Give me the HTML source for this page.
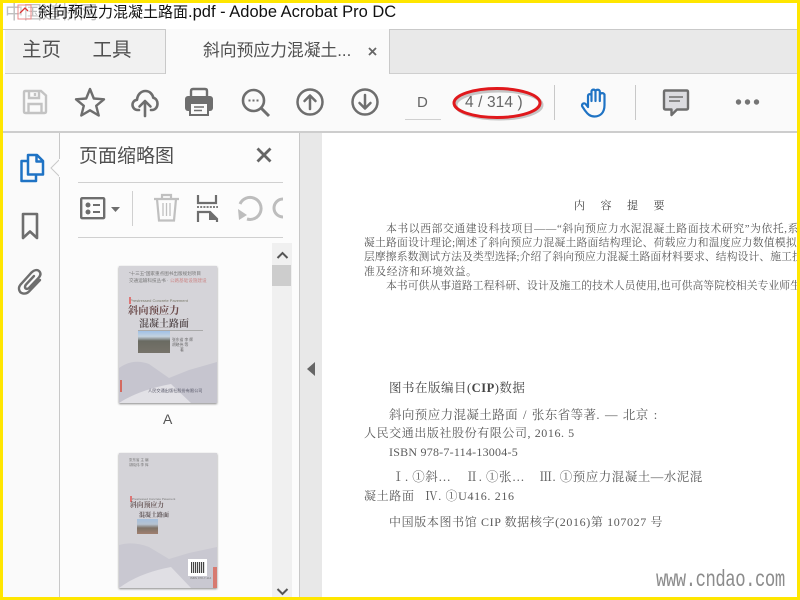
<!DOCTYPE html>
<html><head><meta charset="utf-8">
<style>
html,body{margin:0;padding:0;width:800px;height:600px;overflow:hidden;background:#fff}
body{position:relative;font-family:"Liberation Sans","Noto Sans CJK SC",sans-serif}
.a{position:absolute}
.t{position:absolute;white-space:nowrap;line-height:1}
.s{font-family:"Liberation Serif","Noto Serif CJK SC",serif;color:#5a5a5a;filter:blur(.35px)}
svg{position:absolute;overflow:visible}
.thumb{filter:blur(.35px)}
</style></head><body>
<!-- tab bar -->
<div class="a" style="left:3px;top:29px;width:794px;height:45px;background:#e9e9e9"></div>
<div class="a" style="left:3px;top:29px;width:794px;height:1px;background:#c9c9c9"></div>
<div class="a" style="left:3px;top:73px;width:794px;height:1px;background:#cfcfcf"></div>
<div class="a" style="left:5px;top:30px;width:160px;height:43px;background:#f1f1f1"></div>
<div class="a" style="left:165px;top:29px;width:225px;height:45px;background:#fafafa;border-left:1px solid #c9c9c9;border-right:1px solid #c9c9c9;box-sizing:border-box"></div>
<div class="a" style="left:3px;top:30px;width:2px;height:44px;background:#fff"></div>
<div class="t" style="left:22px;top:41px;font-size:19.5px;color:#505050">主页</div>
<div class="t" style="left:92.500px;top:41px;font-size:19.5px;color:#505050">工具</div>
<div class="t" style="left:203px;top:43px;font-size:16.8px;color:#505050">斜向预应力混凝土...</div>
<svg style="left:368px;top:47px" width="9" height="9"><path d="M1 1L8 8M8 1L1 8" stroke="#666" stroke-width="1.800"/></svg>
<!-- toolbar -->
<div class="a" style="left:3px;top:74px;width:794px;height:57px;background:#fafafa"></div>
<div class="a" style="left:3px;top:131px;width:794px;height:2px;background:#cdcdcd"></div>
<!-- save -->
<svg style="left:22px;top:89px" width="26" height="26" fill="none" stroke="#c3c3c3" stroke-width="2.400"><path d="M2 3.500Q2 2 3.500 2H19L24 6.500V22.500Q24 24 22.500 24H3.500Q2 24 2 22.500Z"/><path d="M7 2V9H17V2M13 4V7M6.500 24V15H19.500V24"/></svg>
<!-- star -->
<svg style="left:75px;top:87px" width="30" height="30" fill="none" stroke="#6e6e6e" stroke-width="2.400" stroke-linejoin="round"><path d="M15 2L18.800 11.500L29 12.300L21.200 18.800L23.700 28.500L15 23.300L6.300 28.500L8.800 18.800L1 12.300L11.200 11.500Z"/></svg>
<!-- cloud upload -->
<svg style="left:131px;top:88px" width="28" height="28" fill="none" stroke="#6e6e6e" stroke-width="2.600" stroke-linecap="round" stroke-linejoin="round"><path d="M8 22H6.500C3.500 22 1.500 19.500 1.500 16.800C1.500 14 3.500 12 6 11.800C6.500 6.500 10 3 14.500 3C18.500 3 21.500 6 22.300 9.800C25 10.500 26.500 13 26.500 15.800C26.500 19 24.500 22 21 22H20"/><path d="M14 28V13M8.500 18.500L14 13L19.500 18.500"/></svg>
<!-- print -->
<svg style="left:185px;top:88px" width="28" height="28"><path d="M6 9V3Q6 1 8 1H20Q22 1 22 3V9" fill="none" stroke="#6e6e6e" stroke-width="2.400"/><rect x="0" y="8" width="28" height="15" rx="3" fill="#6e6e6e"/><rect x="5" y="15" width="18" height="12" fill="#fafafa" stroke="#6e6e6e" stroke-width="2"/><path d="M9 19H19M9 22.500H17" stroke="#6e6e6e" stroke-width="1.500"/></svg>
<!-- search -->
<svg style="left:241px;top:88px" width="30" height="30" fill="none" stroke="#6e6e6e" stroke-width="2.600"><circle cx="12.500" cy="12.500" r="10.500"/><path d="M20 20L28 28" stroke-width="3"/><path d="M7.500 12.500H18" stroke-dasharray="2 2" stroke-width="2"/></svg>
<!-- up -->
<svg style="left:296px;top:88px" width="28" height="28" fill="none" stroke="#6e6e6e" stroke-width="2.500" stroke-linecap="round" stroke-linejoin="round"><circle cx="14" cy="14" r="12.500"/><path d="M14 21V8M8.500 13L14 7.500L19.500 13"/></svg>
<!-- down -->
<svg style="left:351px;top:88px" width="28" height="28" fill="none" stroke="#6e6e6e" stroke-width="2.500" stroke-linecap="round" stroke-linejoin="round"><circle cx="14" cy="14" r="12.500"/><path d="M14 7V20M8.500 15L14 20.500L19.500 15"/></svg>
<div class="t" style="left:417px;top:95px;font-size:15px;color:#666">D</div>
<div class="a" style="left:405px;top:119px;width:36px;height:1px;background:#d0d0d0"></div>
<div class="t" style="left:465px;top:95px;font-size:15.500px;color:#666;letter-spacing:.1px">4 / 314 )</div>
<svg style="left:450px;top:85px" width="96" height="38" fill="none"><ellipse cx="49" cy="20" rx="43" ry="14" stroke="#999" stroke-width="3" opacity=".55"/><ellipse cx="47" cy="18" rx="43" ry="14.500" stroke="#e0181c" stroke-width="3"/></svg>
<div class="a" style="left:554px;top:85px;width:1px;height:35px;background:#c8c8c8"></div>
<div class="a" style="left:635px;top:85px;width:1px;height:35px;background:#c8c8c8"></div>
<!-- hand -->
<svg style="left:581px;top:88px" width="29" height="30" fill="none" stroke="#1f73c4" stroke-width="2.200" stroke-linecap="round" stroke-linejoin="round"><path d="M7 19V8C7 5.500 10.500 5.500 10.500 8V13M10.500 13V3.500C10.500 1 14.500 1 14.500 3.500V13M14.500 13V3.500C14.500 1.200 18.800 1.200 18.800 3.500V13M18.800 13V7C18.800 4.500 23.500 4.500 23.500 7V17C23.500 24.500 19.500 28.500 13.500 28.500C9 28.500 6.500 26 4 22.500L1.300 18.500C0 16 3.300 14 5 16.500L7 19"/></svg>
<!-- comment -->
<svg style="left:663px;top:89px" width="26" height="27" fill="none"><path d="M2.500 1.500H23.500Q25 1.500 25 3V19Q25 20.500 23.500 20.500H14L8.500 26V20.500H2.500Q1 20.500 1 19V3Q1 1.500 2.500 1.500Z" fill="#dcdce0" stroke="#6e6e6e" stroke-width="2.400" stroke-linejoin="round"/><path d="M6 8H20M6 12H17" stroke="#6e6e6e" stroke-width="1.500"/></svg>
<!-- more -->
<svg style="left:735px;top:98px" width="25" height="8" fill="#757575"><circle cx="3.500" cy="4" r="2.700"/><circle cx="12.500" cy="4" r="2.700"/><circle cx="21.500" cy="4" r="2.700"/></svg>
<!-- side rail -->
<div class="a" style="left:3px;top:133px;width:56px;height:464px;background:#fafafa"></div>
<div class="a" style="left:59px;top:133px;width:1px;height:464px;background:#c8c8c8"></div>
<div class="a" style="left:60px;top:133px;width:239px;height:464px;background:#fcfcfc"></div>
<svg style="left:50px;top:157px" width="11" height="22"><path d="M10 2L1 11L10 20" fill="#fcfcfc" stroke="#c8c8c8"/><path d="M10 2V20" stroke="#fcfcfc" stroke-width="2"/></svg>
<!-- pages icon -->
<svg style="left:19px;top:153px" width="26" height="30" fill="none" stroke="#1f73c4" stroke-width="2.500" stroke-linejoin="round"><path d="M9 2H18L24 8V21.500H9Z"/><path d="M17.500 2V8.500H24"/><path d="M9 8H2.500V28H17V21.500"/></svg>
<!-- bookmark -->
<svg style="left:21px;top:212px" width="18" height="28" fill="none" stroke="#6e6e6e" stroke-width="2.600" stroke-linejoin="round"><path d="M2 2H16V26L9 19.500L2 26Z"/></svg>
<!-- paperclip -->
<svg style="left:17px;top:268px" width="26" height="28" fill="none" stroke="#6e6e6e" stroke-width="2.400" stroke-linecap="round"><path d="M23 12L12 23.500C8.500 27 2.500 26 2 21C1.700 18.500 3 17 4.500 15.500L14.500 4.500C17 2 20.500 1 22.500 3.500C24.500 6 23 8.500 21 10.500L12 20C10.500 21.500 8 21 8 19C8 18 8.500 17 9.500 16L17 8"/></svg>
<!-- panel header -->
<div class="t" style="left:79px;top:147px;font-size:19px;color:#505050">页面缩略图</div>
<svg style="left:256px;top:147px" width="16" height="16"><path d="M1.500 1.500L14.500 14.500M14.500 1.500L1.500 14.500" stroke="#666" stroke-width="2.800"/></svg>
<div class="a" style="left:78px;top:182px;width:205px;height:1px;background:#d0d0d0"></div>
<div class="a" style="left:78px;top:237px;width:205px;height:1px;background:#d0d0d0"></div>
<!-- panel toolbar -->
<svg style="left:80px;top:197px" width="26" height="23" fill="none" stroke="#6e6e6e"><rect x="1.200" y="1.200" width="23" height="20" rx="1" stroke-width="2.400"/><circle cx="8" cy="8" r="2.500" fill="#6e6e6e" stroke="none"/><circle cx="8" cy="15" r="2.500" fill="#6e6e6e" stroke="none"/><path d="M13 8H20M13 15H20" stroke-width="2"/></svg>
<svg style="left:111px;top:207px" width="9" height="5"><path d="M0 0H9L4.500 5Z" fill="#6e6e6e"/></svg>
<div class="a" style="left:132px;top:191px;width:1px;height:35px;background:#d0d0d0"></div>
<svg style="left:153px;top:193px" width="27" height="29" fill="none" stroke="#c0c0c0" stroke-width="2.200"><path d="M1 6H26M9 6V2H18V6"/><path d="M4 6L6 27.500H21L23 6"/><path d="M10 10V23M13.500 10V23M17 10V23" stroke-width="1.300"/></svg>
<svg style="left:196px;top:195px" width="23" height="27" fill="none" stroke="#6e6e6e" stroke-width="2.200"><path d="M2 0V8H20V0"/><path d="M1 12H22" stroke-dasharray="2 1.200" stroke-width="1.800"/><path d="M2 27V17H14L21 24V27"/><path d="M13 17L21 25H13Z" fill="#6e6e6e" stroke="none"/></svg>
<svg style="left:236px;top:195px" width="28" height="28" fill="none" stroke="#bdbdbd" stroke-width="3"><path d="M4 9A11 11 0 1 1 11 24"/><path d="M2 14L11 20L3 25Z" fill="#bdbdbd" stroke="none"/></svg>
<svg style="left:278px;top:197px" width="5" height="22" fill="none"><path d="M5 2A9 9 0 0 0 5 20" stroke="#bdbdbd" stroke-width="3"/></svg>
<!-- scrollbar -->
<div class="a" style="left:272px;top:243px;width:20px;height:354px;background:#f0f0f0"></div>
<div class="a" style="left:272px;top:265px;width:19px;height:21px;background:#cdcdcd"></div>
<svg style="left:276px;top:251px" width="13" height="8"><path d="M1.500 7L6.500 2L11.500 7" fill="none" stroke="#555" stroke-width="2"/></svg>
<svg style="left:276px;top:588px" width="13" height="8"><path d="M1.500 1L6.500 6L11.500 1" fill="none" stroke="#555" stroke-width="2"/></svg>
<!-- thumb 1 -->
<div class="a thumb" style="left:119px;top:266px;width:98px;height:137px;background:#d5d4d9;box-shadow:0 1px 2px #888;overflow:hidden">
 <svg style="left:0;top:90px" width="98" height="47"><path d="M0 12Q14 2 30 8L50 22L70 14L98 6V47H0Z" fill="#c6c5cf"/><path d="M0 47Q20 34 52 28L72 47Z" fill="#e2e1e6"/></svg>
 <div class="t" style="left:10px;top:6px;font-size:4.600px;color:#777">“十三五”国家重点图书出版规划项目</div>
 <div class="t" style="left:10px;top:13px;font-size:4.600px;color:#777">交通运输科技丛书 · <span style="color:#c88">公路基础设施建设</span></div>
 <div class="t" style="left:11px;top:33px;font-size:4px;color:#776;">Prestressed Concrete Pavement</div>
 <div class="a" style="left:10px;top:31px;width:2px;height:7px;background:#d77"></div>
 <div class="t" style="left:9px;top:41px;font-size:10.300px;font-weight:bold;color:#6b4a4a;font-family:'Liberation Serif','Noto Serif CJK SC',serif">斜向预应力</div>
 <div class="t" style="left:20px;top:54px;font-size:10px;font-weight:bold;color:#5c5254;font-family:'Liberation Serif','Noto Serif CJK SC',serif">混凝土路面</div>
 <div class="a" style="left:19px;top:64px;width:65px;height:1px;background:#aaa"></div>
 <div class="a" style="left:19px;top:65px;width:32px;height:22px;background:linear-gradient(180deg,#9fc0e6 0,#c5d3e0 25%,#6a6b62 45%,#77736a 100%)"></div>
 <div class="t" style="left:53px;top:73px;font-size:3.800px;color:#666">张东省 李 辉</div>
 <div class="t" style="left:53px;top:78px;font-size:3.800px;color:#666">胡晓伟 等</div>
 <div class="t" style="left:61px;top:83px;font-size:3.800px;color:#666">著</div>
 <div class="t" style="left:29px;top:123px;font-size:4.200px;color:#556">人民交通出版社股份有限公司</div>
 <div class="a" style="left:1px;top:114px;width:2px;height:12px;background:#d46a60"></div>
</div>
<div class="t" style="left:163px;top:412px;font-size:14px;color:#555">A</div>
<!-- thumb 2 -->
<div class="a thumb" style="left:119px;top:453px;width:98px;height:135px;background:#d4d3d8;box-shadow:0 1px 2px #888;overflow:hidden">
 <svg style="left:0;top:88px" width="98" height="47"><path d="M0 4Q14 0 30 6L50 18L70 12L98 6V47H0Z" fill="#c9c8d1"/><path d="M0 47Q20 32 52 26L72 47Z" fill="#e0dfe4"/></svg>
 <div class="t" style="left:10px;top:6px;font-size:3.500px;color:#777">张东省 主 编</div>
 <div class="t" style="left:10px;top:11px;font-size:3.500px;color:#777">胡晓伟 李 辉</div>
 <div class="a" style="left:11px;top:43px;width:2px;height:6px;background:#d77"></div>
 <div class="t" style="left:13px;top:45px;font-size:3px;color:#777">Prestressed Concrete Pavement</div>
 <div class="t" style="left:11px;top:50px;font-size:6.800px;font-weight:bold;color:#6b5a5a;font-family:'Liberation Serif','Noto Serif CJK SC',serif">斜向预应力</div>
 <div class="t" style="left:20px;top:60px;font-size:6px;font-weight:bold;color:#5c5254;font-family:'Liberation Serif','Noto Serif CJK SC',serif">混凝土路面</div>
 <div class="a" style="left:18px;top:66px;width:21px;height:15px;background:linear-gradient(180deg,#a6bfdc 0,#b5c2d0 35%,#7e7266 60%,#a08070)"></div>
 <div class="a" style="left:69px;top:106px;width:19px;height:17px;background:#fff"></div>
 <div class="a" style="left:72px;top:109px;width:14px;height:11px;background:repeating-linear-gradient(90deg,#444 0 1px,#ddd 1px 2px)"></div>
 <div class="t" style="left:71px;top:124px;font-size:3px;color:#777">ISBN 978-7-114</div>
 <div class="a" style="left:94px;top:114px;width:4px;height:21px;background:#d77a70"></div>
</div>
<!-- center strip -->
<div class="a" style="left:292px;top:133px;width:7px;height:464px;background:#fcfcfc"></div>
<div class="a" style="left:299px;top:133px;width:23px;height:464px;background:#e8e8e8;border-left:1px solid #c8c8c8;box-sizing:border-box"></div>
<svg style="left:307px;top:362px" width="8" height="14"><path d="M8 0V14L0 7Z" fill="#666"/></svg>
<!-- page -->
<div class="a" style="left:322px;top:133px;width:475px;height:464px;background:#fff;overflow:hidden"></div>
<div class="t s" style="left:574px;top:201px;font-size:11px;letter-spacing:15.500px;color:#444">内容提要</div>
<div class="t s" style="left:386px;top:224px;font-size:10.800px;letter-spacing:.6px">本书以西部交通建设科技项目——“斜向预应力水泥混凝土路面技术研究”为依托,系</div>
<div class="t s" style="left:364px;top:238px;font-size:10.800px;letter-spacing:.22px">凝土路面设计理论;阐述了斜向预应力混凝土路面结构理论、荷载应力和温度应力数值模拟</div>
<div class="t s" style="left:364px;top:252px;font-size:10.800px;letter-spacing:.1px">层摩擦系数测试方法及类型选择;介绍了斜向预应力混凝土路面材料要求、结构设计、施工技</div>
<div class="t s" style="left:364px;top:267px;font-size:10.800px;letter-spacing:.55px">准及经济和环境效益。</div>
<div class="t s" style="left:386px;top:281px;font-size:10.800px;letter-spacing:.05px">本书可供从事道路工程科研、设计及施工的技术人员使用,也可供高等院校相关专业师生</div>
<div class="t s" style="left:389px;top:382px;font-size:12.500px;letter-spacing:.5px;color:#444">图书在版编目(<b>CIP</b>)数据</div>
<div class="t s" style="left:389px;top:409px;font-size:12.500px;letter-spacing:.4px;word-spacing:1.500px">斜向预应力混凝土路面 / 张东省等著. — 北京 :</div>
<div class="t s" style="left:364px;top:427px;font-size:12px;letter-spacing:.58px">人民交通出版社股份有限公司, 2016. 5</div>
<div class="t s" style="left:389px;top:446px;font-size:12px;letter-spacing:.23px">ISBN 978-7-114-13004-5</div>
<div class="t s" style="left:392px;top:471px;font-size:12.500px;letter-spacing:.5px;white-space:pre">Ⅰ. ①斜…    Ⅱ. ①张…    Ⅲ. ①预应力混凝土—水泥混</div>
<div class="t s" style="left:364px;top:490px;font-size:12px;letter-spacing:.65px;white-space:pre">凝土路面   Ⅳ. ①U416. 216</div>
<div class="t s" style="left:389px;top:516px;font-size:12px;letter-spacing:.62px">中国版本图书馆 CIP 数据核字(2016)第 107027 号</div>
<div class="t" style="left:656px;top:569px;font-size:23px;color:#8c8c8c;font-family:'Liberation Mono',monospace;letter-spacing:-.6px;transform:scaleX(.75);transform-origin:0 0">www.cndao.com</div>
<!-- title -->
<div class="t" style="left:5px;top:4px;font-size:18.500px;color:#aaa;opacity:.75">中国道桥网</div>
<svg style="left:17px;top:3px" width="15" height="17" fill="none"><rect x="1" y="2" width="13" height="14" fill="#fff" fill-opacity=".3" stroke="#e88" stroke-width="1"/><path d="M3 10L8 5L11 8" stroke="#d33" stroke-width="1.300"/></svg>
<div class="t" style="left:38px;top:1px;font-size:15px;line-height:23px;color:#111">斜向预应力混凝土路面<span style="font-size:16.500px">.pdf - Adobe Acrobat Pro DC</span></div>
<!-- yellow frame -->
<div class="a" style="left:0;top:0;width:800px;height:3px;background:#ffe600"></div>
<div class="a" style="left:0;top:597px;width:800px;height:3px;background:#ffe600"></div>
<div class="a" style="left:0;top:0;width:3px;height:600px;background:#ffe600"></div>
<div class="a" style="left:797px;top:0;width:3px;height:600px;background:#ffe600"></div>
</body></html>
